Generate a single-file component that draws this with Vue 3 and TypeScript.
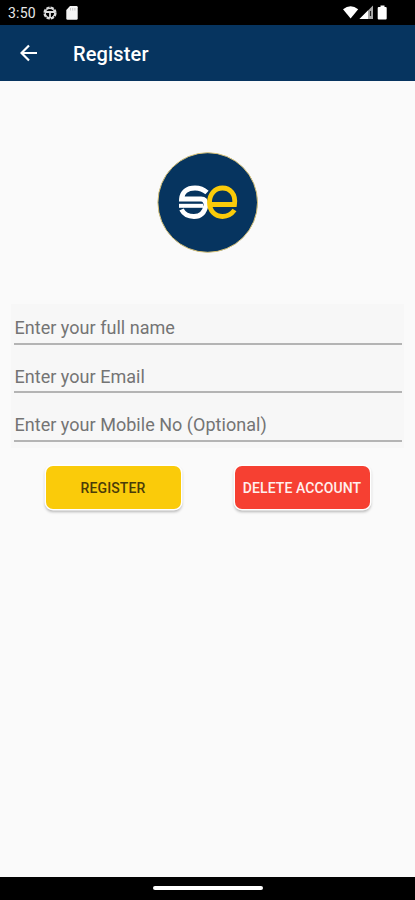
<script setup lang="ts">
import { ref } from 'vue'

interface Field {
  id: string
  type: string
  hint: string
}

const fields: Field[] = [
  { id: 'name', type: 'text', hint: 'Enter your full name' },
  { id: 'email', type: 'email', hint: 'Enter your Email' },
  { id: 'mobile', type: 'tel', hint: 'Enter your Mobile No (Optional)' },
]

const values = ref<Record<string, string>>({ name: '', email: '', mobile: '' })
</script>

<template>
  <div class="screen">
    <header class="status">
      <div class="status-left">
        <span class="clock">3:50</span>
        <svg class="dial" width="14" height="14" viewBox="0 0 14 14">
          <circle cx="7" cy="7" r="5.5" fill="none" stroke="#ddd" stroke-width="2.2" stroke-dasharray="3.3 1" />
          <circle cx="7" cy="7" r="4.7" fill="none" stroke="#ddd" stroke-width="1.2" />
          <path d="M3 6h8M7 7v4" stroke="#ddd" stroke-width="1.8" />
        </svg>
        <svg class="card" width="12" height="14" viewBox="0 0 12 14">
          <path d="M4 0h6.5q1.2 0 1.2 1.2v11.3q0 1.2-1.2 1.2h-9Q.3 13.700.3 12.500V4z" fill="#f4f4f4" />
          <path d="M4.500 2v2.500M6.700 2v2.500M8.900 2v2.500" stroke="#bbb" stroke-width=".8" />
        </svg>
      </div>
      <svg class="status-right" width="48" height="16" viewBox="0 0 48 16">
        <path d="M0 4.200Q7.600-1.500 15.200 4.200L7.600 13.500z" fill="#fff" />
        <path d="M30 0.500V14H16.500z" fill="#aaa" />
        <path d="M25 5.500V14h-8.500z" fill="#fff" />
        <path d="M27.500 6v5" stroke="#222" stroke-width="1.200" />
        <path d="M37.500.500h4v1.500h1.200q1 0 1 1v10.500q0 1-1 1h-7q-1 0-1-1V3q0-1 1-1h1.800z" fill="#fff" />
      </svg>
    </header>

    <nav class="toolbar">
      <svg class="back" width="18" height="18" viewBox="0 0 18 18">
        <path d="M17 9H2M9 1.500L1.500 9L9 16.500" fill="none" stroke="#fff" stroke-width="2.200" />
      </svg>
      <h1>Register</h1>
    </nav>

    <main>
      <svg class="logo" width="102" height="102" viewBox="0 0 102 102">
        <circle cx="50.700" cy="50.500" r="49.800" fill="#06345f" stroke="#d8c277" stroke-width="1" />
        <g fill="none" stroke-width="4.800">
          <path d="M50 40.500Q45 36 38 36C30 36 25 40 24.500 47H44Q49 47 49 53Q47 64.500 37 64.500Q28 64.500 24.500 57.500" stroke="#fff" />
          <path d="M22 53.800H46" stroke="#fff" stroke-width="4" />
          <path d="M53 52.500H77.500C79 42 73 36 65.500 36C58 36 52.500 42 52.500 50.500C52.500 59 58 64.500 65.500 64.500Q73 64.500 77.500 58" stroke="#facb0a" />
        </g>
      </svg>

      <form class="form" @submit.prevent>
        <input
          v-for="field in fields"
          :key="field.id"
          v-model="values[field.id]"
          :type="field.type"
          :placeholder="field.hint"
          :aria-label="field.hint"
        />
      </form>

      <div class="actions">
        <button class="register" type="button">REGISTER</button>
        <button class="delete" type="button">DELETE ACCOUNT</button>
      </div>
    </main>

    <footer class="gesture"><span class="pill"></span></footer>
  </div>
</template>

<style>
body {
  background: #fafafa;
}
</style>

<style scoped>
.screen {
  display: flex;
  flex-direction: column;
  height: 900px;
  width: 415px;
  overflow: hidden;
  background: #fafafa;
  font-family: Roboto, sans-serif;
}
.status {
  display: flex;
  flex: none;
  justify-content: space-between;
  height: 25px;
  background: #000;
}
.status-left {
  display: flex;
  padding-left: 8px;
}
.clock {
  width: 35px;
  font-size: 14px;
  line-height: 26px;
  letter-spacing: 0.2px;
  color: #e8e8e8;
}
.dial {
  margin-top: 6px;
}
.card {
  margin: 6px 0 0 9px;
}
.status-right {
  margin: 5px 24px 0 0;
}
.toolbar {
  display: flex;
  flex: none;
  align-items: center;
  height: 56px;
  padding-left: 20px;
  background: #06345f;
}
h1 {
  margin: 2px 0 0 35px;
  font-size: 20px;
  line-height: 24px;
  font-weight: 500;
  letter-spacing: 0.15px;
  color: #fff;
}
main {
  display: flex;
  flex: 1;
  flex-direction: column;
  align-items: center;
  padding-top: 71px;
}
.logo {
  display: block;
}
.form {
  display: flex;
  flex-direction: column;
  box-sizing: border-box;
  width: 393px;
  height: 144px;
  margin-top: 50px;
  padding: 0 2px 0 3px;
  background: #f7f7f7;
}
input {
  box-sizing: border-box;
  width: 100%;
  height: 48px;
  margin: 0;
  padding: 16px 0 0 0.500px;
  border: 0;
  border-bottom: 2px solid #b4b4b4;
  outline: 0;
  background: none;
  font: 400 18px Roboto, sans-serif;
  letter-spacing: 0.03px;
}
input:first-child {
  height: 41px;
  padding-top: 8px;
}
input:last-child {
  height: 49px;
}
input::placeholder {
  color: #747474;
  opacity: 1;
}
.actions {
  display: flex;
  gap: 54px;
  margin: 18px 0 0;
}
button {
  width: 135px;
  height: 43px;
  padding: 1px 0 0;
  border: 0;
  border-radius: 7px;
  box-shadow: 0 0 0 1.500px #fff, 0 2px 3px 1px rgba(0, 0, 0, 0.28);
  font: 500 14px Roboto, sans-serif;
  letter-spacing: 0.1px;
}
.register {
  background: #facb0a;
  color: #4a3c08;
}
.delete {
  background: #f64032;
  color: #fff0ee;
}
.gesture {
  display: flex;
  flex: none;
  justify-content: center;
  height: 23px;
  background: #000;
}
.pill {
  width: 110px;
  height: 4px;
  margin-top: 9px;
  border-radius: 2px;
  background: #fff;
}
</style>
